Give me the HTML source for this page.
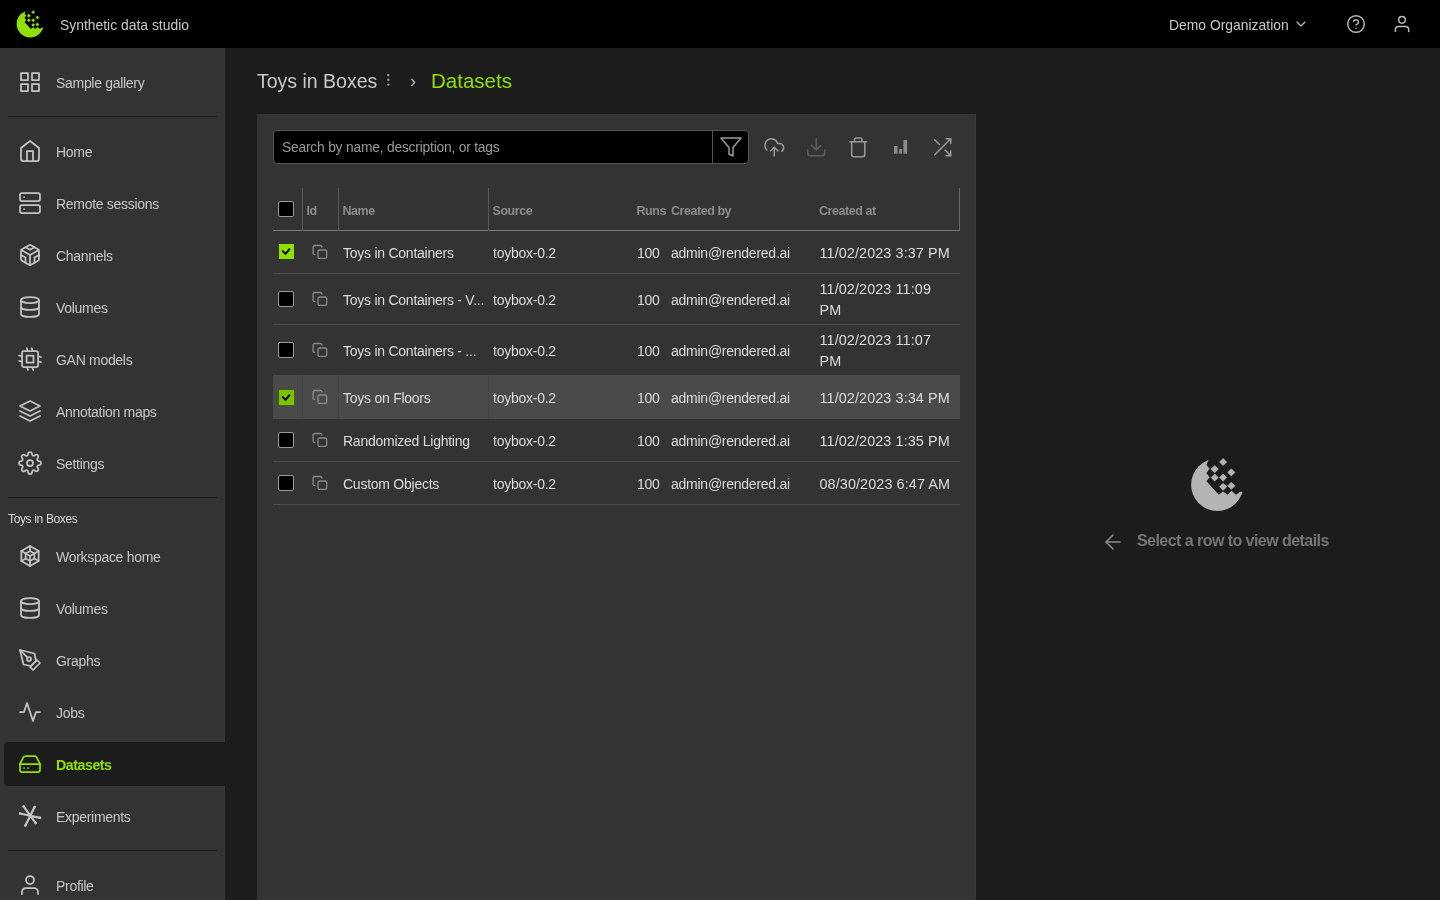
<!DOCTYPE html>
<html><head><meta charset="utf-8">
<style>
*{box-sizing:border-box;margin:0;padding:0}
html,body{width:1440px;height:900px;overflow:hidden;background:#1c1c1c;font-family:"Liberation Sans",sans-serif;position:relative}
body{will-change:transform}
.abs{position:absolute}
svg{overflow:visible}
.t{position:absolute;white-space:nowrap}
.sic{position:absolute;fill:none;stroke-width:1.75;stroke-linecap:round;stroke-linejoin:round}
.ico{position:absolute;fill:none;stroke:#999;stroke-width:1.5;stroke-linecap:round;stroke-linejoin:round}
.cbx{position:absolute;left:278px;width:16px;height:16px;background:#000;border:1px solid #9a9a9a;border-radius:2px}
.cbx.on{background:#8fe000;border:none;left:279px;width:15px;height:15px;border-radius:0}
.cbx.on.hv{background:#79c200;box-shadow:0 0 0 0.6px #3f6a00}
.cbx.on svg{position:absolute;left:0;top:0}
.cpy{position:absolute;left:312px;fill:none;stroke:#8a8a8a;stroke-width:1.3;stroke-linecap:round;stroke-linejoin:round}
.td{font-size:14px;letter-spacing:-0.25px;color:#dcdcdc;line-height:20px}
.dt{font-size:14.4px;letter-spacing:0.1px}
.th{font-size:12.5px;font-weight:bold;color:#8c8c8c;line-height:18px;letter-spacing:-0.45px}
</style></head><body>
<div class="abs" style="left:0;top:0;width:1440px;height:48px;background:#000"></div>
<svg class="abs" style="left:13.2px;top:7.2px" width="33" height="33" viewBox="0 0 64 64"><defs><mask id="m1"><rect x="-10" y="-10" width="90" height="90" fill="#fff"/><polygon points="24.9,7.1 22.4,12.8 25.6,16.7 22.4,21 25.6,25.2 22.4,29.2 34.8,42.7 39.1,39.5 43.4,42.7 47.6,38.8 51.9,42.7 56.2,39.8 70,40 70,-5 24.9,-5" fill="#000"/></mask></defs><circle cx="33.3" cy="32.8" r="26.2" fill="#8fe000" mask="url(#m1)"/><g fill="#8fe000" stroke="#8fe000" stroke-width="0.6" stroke-linejoin="round"><path d="M39.1 6.7 L42.4 10 L39.1 13.3 L35.800000000000004 10 Z"/><path d="M30.7 13.8 L34.0 17.1 L30.7 20.400000000000002 L27.4 17.1 Z"/><path d="M47.3 17.099999999999998 L50.599999999999994 20.4 L47.3 23.7 L44.0 20.4 Z"/><path d="M30.7 22.3 L34.0 25.6 L30.7 28.900000000000002 L27.4 25.6 Z"/><path d="M39.1 22.3 L42.4 25.6 L39.1 28.900000000000002 L35.800000000000004 25.6 Z"/><path d="M39.1 31.499999999999996 L42.4 34.8 L39.1 38.099999999999994 L35.800000000000004 34.8 Z"/><path d="M47.3 30.499999999999996 L50.599999999999994 33.8 L47.3 37.099999999999994 L44.0 33.8 Z"/></g></svg>
<div class="t" style="left:60px;top:13px;line-height:24px;font-size:13.9px;color:#c8c8c8">Synthetic data studio</div>
<div class="t" style="left:1169px;top:13px;line-height:24px;font-size:13.9px;color:#c8c8c8">Demo Organization</div>
<svg class="ico" style="left:1293.2px;top:15.8px;stroke:#bbb;stroke-width:1.75" width="16" height="16" viewBox="0 0 24 24"><path d="M6 9l6 6 6-6"/></svg>
<svg class="ico" style="left:1346px;top:14px;stroke:#bbb;stroke-width:1.75" width="20" height="20" viewBox="0 0 24 24"><circle cx="12" cy="12" r="10"/><path d="M9.09 9a3 3 0 0 1 5.83 1c0 2-3 3-3 3"/><circle cx="12" cy="17.2" r="0.9" fill="#bbb" stroke="none"/></svg>
<svg class="ico" style="left:1392px;top:14px;stroke:#bbb;stroke-width:1.75" width="20" height="20" viewBox="0 0 24 24"><path d="M20 21v-2a4 4 0 0 0-4-4H8a4 4 0 0 0-4 4v2"/><circle cx="12" cy="7" r="4"/></svg>

<div class="abs" style="left:0;top:48px;width:225px;height:852px;background:#333;border-right:1px solid #383838"></div>
<svg class="sic" style="left:18px;top:70px;stroke:#c4c4c4" width="24" height="24" viewBox="0 0 24 24"><rect x="3" y="3" width="7" height="7"/><rect x="14" y="3" width="7" height="7"/><rect x="14" y="14" width="7" height="7"/><rect x="3" y="14" width="7" height="7"/></svg>
<div class="t" style="left:56px;top:70.5px;line-height:24px;font-size:14px;letter-spacing:-0.3px;color:#c8c8c8;">Sample gallery</div>
<svg class="sic" style="left:18px;top:139px;stroke:#c4c4c4" width="24" height="24" viewBox="0 0 24 24"><path d="M3 9l9-7 9 7v11a2 2 0 0 1-2 2H5a2 2 0 0 1-2-2z"/><path d="M9 22V12h6v10"/></svg>
<div class="t" style="left:56px;top:139.5px;line-height:24px;font-size:14px;letter-spacing:-0.3px;color:#c8c8c8;">Home</div>
<svg class="sic" style="left:18px;top:191px;stroke:#c4c4c4" width="24" height="24" viewBox="0 0 24 24"><rect x="2" y="2" width="20" height="8" rx="2"/><rect x="2" y="14" width="20" height="8" rx="2"/><path d="M6 6h.01M6 18h.01"/></svg>
<div class="t" style="left:56px;top:191.5px;line-height:24px;font-size:14px;letter-spacing:-0.3px;color:#c8c8c8;">Remote sessions</div>
<svg class="sic" style="left:18px;top:243px;stroke:#c4c4c4" width="24" height="24" viewBox="0 0 24 24"><path d="M21 16V8a2 2 0 0 0-1-1.73l-7-4a2 2 0 0 0-2 0l-7 4A2 2 0 0 0 3 8v8a2 2 0 0 0 1 1.73l7 4a2 2 0 0 0 2 0l7-4A2 2 0 0 0 21 16z"/><path d="M7.5 4.21l4.5 2.6 4.5-2.6"/><path d="M7.5 19.79V14.6L3 12"/><path d="M21 12l-4.5 2.6v5.19"/><path d="M3.27 6.96L12 12.01l8.73-5.05"/><path d="M12 22.08V12"/></svg>
<div class="t" style="left:56px;top:243.5px;line-height:24px;font-size:14px;letter-spacing:-0.3px;color:#c8c8c8;">Channels</div>
<svg class="sic" style="left:18px;top:295px;stroke:#c4c4c4" width="24" height="24" viewBox="0 0 24 24"><ellipse cx="12" cy="5" rx="9" ry="3"/><path d="M3 5v14a9 3 0 0 0 18 0V5"/><path d="M3 12a9 3 0 0 0 18 0"/></svg>
<div class="t" style="left:56px;top:295.5px;line-height:24px;font-size:14px;letter-spacing:-0.3px;color:#c8c8c8;">Volumes</div>
<svg class="sic" style="left:18px;top:347px;stroke:#c4c4c4" width="24" height="24" viewBox="0 0 24 24"><rect x="4.1" y="4.1" width="16" height="16" rx="1.6"/><rect x="8.6" y="8.6" width="6.9" height="6.9"/><path d="M8.8 1.2L9.6 3.6M13.6 1.2L14.6 3.6M9.4 20.6L10 23M14.4 20.6L15.2 23M1.2 8.7L3.6 9.2M1.2 13.9L3.6 14.5M20.6 9.3L23 10M20.6 14.5L23 15.2"/></svg>
<div class="t" style="left:56px;top:347.5px;line-height:24px;font-size:14px;letter-spacing:-0.3px;color:#c8c8c8;">GAN models</div>
<svg class="sic" style="left:18px;top:399px;stroke:#c4c4c4" width="24" height="24" viewBox="0 0 24 24"><path d="M12 2L2 7l10 5 10-5-10-5z"/><path d="M2 17l10 5 10-5"/><path d="M2 12l10 5 10-5"/></svg>
<div class="t" style="left:56px;top:399.5px;line-height:24px;font-size:14px;letter-spacing:-0.3px;color:#c8c8c8;">Annotation maps</div>
<svg class="sic" style="left:18px;top:451px;stroke:#c4c4c4" width="24" height="24" viewBox="0 0 24 24"><circle cx="12" cy="12" r="3"/><path d="M19.4 15a1.65 1.65 0 0 0 .33 1.82l.06.06a2 2 0 0 1 0 2.83 2 2 0 0 1-2.83 0l-.06-.06a1.65 1.65 0 0 0-1.820-.33 1.65 1.65 0 0 0-1 1.51V21a2 2 0 0 1-2 2 2 2 0 0 1-2-2v-.09A1.65 1.65 0 0 0 9 19.4a1.65 1.65 0 0 0-1.82.33l-.06.06a2 2 0 0 1-2.83 0 2 2 0 0 1 0-2.83l.06-.06a1.65 1.65 0 0 0 .33-1.82 1.65 1.65 0 0 0-1.51-1H3a2 2 0 0 1-2-2 2 2 0 0 1 2-2h.09A1.65 1.65 0 0 0 4.6 9a1.65 1.65 0 0 0-.33-1.82l-.06-.06a2 2 0 0 1 0-2.830 2 2 0 0 1 2.83 0l.06.06a1.65 1.65 0 0 0 1.82.33H9a1.65 1.65 0 0 0 1-1.51V3a2 2 0 0 1 2-2 2 2 0 0 1 2 2v.09a1.65 1.65 0 0 0 1 1.51 1.65 1.65 0 0 0 1.82-.33l.06-.06a2 2 0 0 1 2.83 0 2 2 0 0 1 0 2.83l-.06.06a1.65 1.65 0 0 0-.33 1.82V9a1.65 1.65 0 0 0 1.51 1H21a2 2 0 0 1 2 2 2 2 0 0 1-2 2h-.09a1.65 1.65 0 0 0-1.51 1z"/></svg>
<div class="t" style="left:56px;top:451.5px;line-height:24px;font-size:14px;letter-spacing:-0.3px;color:#c8c8c8;">Settings</div>
<svg class="sic" style="left:18px;top:544px;stroke:#c4c4c4" width="24" height="24" viewBox="0 0 24 24"><path d="M12 2L20.66 7V17L12 22L3.34 17V7Z"/><path d="M12 7L16.33 9.5V14.5L12 17L7.67 14.5V9.5Z"/><path d="M12 2V7M20.66 7L16.33 9.5M20.66 17L16.33 14.5M12 22V17M3.34 17L7.67 14.5M3.34 7L7.67 9.5M7.67 9.5L12 12L16.33 9.5M12 12V17"/></svg>
<div class="t" style="left:56px;top:544.5px;line-height:24px;font-size:14px;letter-spacing:-0.3px;color:#c8c8c8;">Workspace home</div>
<svg class="sic" style="left:18px;top:596px;stroke:#c4c4c4" width="24" height="24" viewBox="0 0 24 24"><ellipse cx="12" cy="5" rx="9" ry="3"/><path d="M3 5v14a9 3 0 0 0 18 0V5"/><path d="M3 12a9 3 0 0 0 18 0"/></svg>
<div class="t" style="left:56px;top:596.5px;line-height:24px;font-size:14px;letter-spacing:-0.3px;color:#c8c8c8;">Volumes</div>
<svg class="sic" style="left:18px;top:648px;stroke:#c4c4c4" width="24" height="24" viewBox="0 0 24 24"><path d="M12 19l7-7 3 3-7 7-3-3z"/><path d="M18 13l-1.5-7.5L2 2l3.5 14.5L13 18l5-5z"/><path d="M2 2l7.586 7.586"/><circle cx="11" cy="11" r="2"/></svg>
<div class="t" style="left:56px;top:648.5px;line-height:24px;font-size:14px;letter-spacing:-0.3px;color:#c8c8c8;">Graphs</div>
<svg class="sic" style="left:18px;top:700px;stroke:#c4c4c4" width="24" height="24" viewBox="0 0 24 24"><path d="M22 12h-4l-3 9L9 3l-3 9H2"/></svg>
<div class="t" style="left:56px;top:700.5px;line-height:24px;font-size:14px;letter-spacing:-0.3px;color:#c8c8c8;">Jobs</div>
<div class="abs" style="left:4px;top:742px;width:221px;height:44px;background:#1c1c1c;border-radius:4px 0 0 4px"></div>
<svg class="sic" style="left:18px;top:752px;stroke:#8fe000" width="24" height="24" viewBox="0 0 24 24"><path d="M22 12H2"/><path d="M5.45 5.11L2 12v6a2 2 0 0 0 2 2h16a2 2 0 0 0 2-2v-6l-3.45-6.89A2 2 0 0 0 16.76 4H7.24a2 2 0 0 0-1.79 1.11z"/><path d="M6 16h.01M10 16h.01"/></svg>
<div class="t" style="left:56px;top:753.0px;line-height:24px;font-size:14.2px;letter-spacing:-0.45px;color:#8fe000;font-weight:bold;">Datasets</div>
<svg class="sic" style="left:18px;top:804px;stroke:#c4c4c4" width="24" height="24" viewBox="0 0 24 24"><path stroke-width="2.2" d="M5.6 2.4L17.7 19.1M16.6 3.1L7.4 21.6M2 9.5L22 13.8"/><circle cx="5.6" cy="2.4" r="1.25" fill="#c4c4c4" stroke="none"/><circle cx="17.7" cy="19.1" r="1.25" fill="#c4c4c4" stroke="none"/><circle cx="16.6" cy="3.1" r="1.25" fill="#c4c4c4" stroke="none"/><circle cx="7.4" cy="21.6" r="1.25" fill="#c4c4c4" stroke="none"/><circle cx="2" cy="9.5" r="1.25" fill="#c4c4c4" stroke="none"/><circle cx="22" cy="13.8" r="1.25" fill="#c4c4c4" stroke="none"/></svg>
<div class="t" style="left:56px;top:804.5px;line-height:24px;font-size:14px;letter-spacing:-0.3px;color:#c8c8c8;">Experiments</div>
<svg class="sic" style="left:18px;top:873px;stroke:#c4c4c4" width="24" height="24" viewBox="0 0 24 24"><path d="M20 21v-2a4 4 0 0 0-4-4H8a4 4 0 0 0-4 4v2"/><circle cx="12" cy="7" r="4"/></svg>
<div class="t" style="left:56px;top:873.5px;line-height:24px;font-size:14px;letter-spacing:-0.3px;color:#c8c8c8;">Profile</div>
<div class="abs" style="left:8px;top:116px;width:209px;height:1px;background:#1c1c1c"></div>
<div class="abs" style="left:8px;top:497px;width:209px;height:1px;background:#1c1c1c"></div>
<div class="abs" style="left:8px;top:850px;width:209px;height:1px;background:#1c1c1c"></div>
<div class="t" style="left:8px;top:511px;line-height:16px;font-size:12px;letter-spacing:-0.35px;color:#d8d8d8">Toys in Boxes</div>

<div class="t" style="left:257px;top:67px;font-size:19.5px;line-height:28px;color:#c8c8c8">Toys in Boxes</div>
<svg class="abs" style="left:386px;top:73px" width="4" height="14" viewBox="0 0 4 14"><g fill="#9a9a9a"><circle cx="2.3" cy="2" r="1.2"/><circle cx="2.3" cy="6.8" r="1.2"/><circle cx="2.3" cy="11.6" r="1.2"/></g></svg>
<div class="t" style="left:410px;top:67px;font-size:18px;line-height:28px;color:#bbb">›</div>
<div class="t" style="left:431px;top:67px;font-size:20.5px;line-height:28px;color:#8fe000">Datasets</div>

<div class="abs" style="left:257px;top:114px;width:719px;height:786px;background:#333;border-right:1px solid #383838"></div>
<div class="abs" style="left:273px;top:130px;width:476px;height:34px;background:#000;border:1px solid #555;border-radius:4px"></div>
<div class="abs" style="left:712px;top:131px;width:1px;height:32px;background:#555"></div>
<div class="t" style="left:282px;top:139px;line-height:18px;font-size:13.8px;letter-spacing:-0.2px;color:#999">Search by name, description, or tags</div>
<svg class="ico" style="left:718.65px;top:134.85px;stroke:#9a9a9a" width="24" height="24" viewBox="0 0 24 24"><path d="M22 3H2l8 9.46V19l4 2v-8.54L22 3z"/></svg>
<svg class="ico" style="left:762.8px;top:135.6px;stroke:#9a9a9a;stroke-width:1.6" width="22.5" height="22.5" viewBox="0 0 24 24"><path d="M4 14.899A7 7 0 1 1 15.71 8h1.79a4.5 4.5 0 0 1 2.5 8.242"/><path d="M12 12v9"/><path d="M16 16l-4-4-4 4"/></svg>
<svg class="ico" style="left:805.15px;top:135.55px;stroke:#5e5e5e;stroke-width:1.6" width="22.5" height="22.5" viewBox="0 0 24 24"><path d="M21 15v4a2 2 0 0 1-2 2H5a2 2 0 0 1-2-2v-4"/><path d="M7 10l5 5 5-5"/><path d="M12 15V3"/></svg>
<svg class="ico" style="left:847.05px;top:135.75px;stroke:#9a9a9a;stroke-width:1.6" width="22.5" height="22.5" viewBox="0 0 24 24"><path d="M3 6h18"/><path d="M19 6v14c0 1-1 2-2 2H7c-1 0-2-1-2-2V6"/><path d="M8 6V4c0-1 1-2 2-2h4c1 0 2 1 2 2v2"/></svg>
<svg class="abs" style="left:893.8px;top:140px" width="14" height="14" viewBox="0 0 14 14"><g fill="#8a8a8a"><rect x="0" y="6" width="3.6" height="7.7"/><rect x="5.2" y="9" width="2.8" height="4.7"/><rect x="9.4" y="0" width="3.7" height="13.7"/></g></svg>
<svg class="ico" style="left:931.1px;top:135.5px;stroke:#9a9a9a;stroke-width:1.6" width="22.5" height="22.5" viewBox="0 0 24 24"><path d="M16 3h5v5"/><path d="M4 20L21 3"/><path d="M21 16v5h-5"/><path d="M15 15l6 6"/><path d="M4 4l5 5"/></svg>
<div class="abs" style="left:273px;top:188px;width:687px;height:43px;border-bottom:1px solid #7a7a7a;border-right:1px solid #686868"></div>
<div class="cbx" style="left:278px;top:201px"></div>
<div class="abs" style="left:302px;top:188px;width:1px;height:43px;background:#5a5a5a"></div>
<div class="abs" style="left:338px;top:188px;width:1px;height:43px;background:#5a5a5a"></div>
<div class="abs" style="left:488px;top:188px;width:1px;height:43px;background:#5a5a5a"></div>
<div class="t th" style="left:306.5px;top:202px">Id</div>
<div class="t th" style="left:342.5px;top:202px">Name</div>
<div class="t th" style="left:492.5px;top:202px">Source</div>
<div class="t th" style="left:636.5px;top:202px">Runs</div>
<div class="t th" style="left:671px;top:202px">Created by</div>
<div class="t th" style="left:819px;top:202px">Created at</div>
<div class="abs" style="left:273px;top:273px;width:687px;height:1px;background:#4d4d4d"></div>
<div class="cbx on" style="top:244px"><svg width="15" height="15" viewBox="0 0 15 15"><path d="M3.7 7.1 L6.5 9.9 L10.5 5.2" fill="none" stroke="#000" stroke-width="1.9" stroke-linecap="round" stroke-linejoin="round"/></svg></div>
<svg class="cpy" style="top:244px" width="16" height="16" viewBox="0 0 16 16"><path d="M2.7 10.5 A1.6 1.6 0 0 1 1.1 8.9 V3.1 A1.6 1.6 0 0 1 2.7 1.5 H8.3 A1.6 1.6 0 0 1 9.9 3.1"/><rect x="6" y="6" width="8.7" height="8.4" rx="1.6"/></svg>
<div class="t td" style="left:343px;top:243px">Toys in Containers</div>
<div class="t td" style="left:493px;top:243px">toybox-0.2</div>
<div class="t td" style="left:637px;top:243px">100</div>
<div class="t td" style="left:671px;top:243px">admin@rendered.ai</div>
<div class="t td dt" style="left:819.5px;top:243px">11/02/2023 3:37 PM</div>
<div class="abs" style="left:273px;top:324px;width:687px;height:1px;background:#4d4d4d"></div>
<div class="cbx" style="left:278px;top:291px"></div>
<svg class="cpy" style="top:291px" width="16" height="16" viewBox="0 0 16 16"><path d="M2.7 10.5 A1.6 1.6 0 0 1 1.1 8.9 V3.1 A1.6 1.6 0 0 1 2.7 1.5 H8.3 A1.6 1.6 0 0 1 9.9 3.1"/><rect x="6" y="6" width="8.7" height="8.4" rx="1.6"/></svg>
<div class="t td" style="left:343px;top:290px">Toys in Containers - V...</div>
<div class="t td" style="left:493px;top:290px">toybox-0.2</div>
<div class="t td" style="left:637px;top:290px">100</div>
<div class="t td" style="left:671px;top:290px">admin@rendered.ai</div>
<div class="t td dt" style="left:819.5px;top:278.5px;line-height:21px">11/02/2023 11:09<br>PM</div>
<div class="abs" style="left:273px;top:375px;width:687px;height:1px;background:#4d4d4d"></div>
<div class="cbx" style="left:278px;top:342px"></div>
<svg class="cpy" style="top:342px" width="16" height="16" viewBox="0 0 16 16"><path d="M2.7 10.5 A1.6 1.6 0 0 1 1.1 8.9 V3.1 A1.6 1.6 0 0 1 2.7 1.5 H8.3 A1.6 1.6 0 0 1 9.9 3.1"/><rect x="6" y="6" width="8.7" height="8.4" rx="1.6"/></svg>
<div class="t td" style="left:343px;top:341px">Toys in Containers - ...</div>
<div class="t td" style="left:493px;top:341px">toybox-0.2</div>
<div class="t td" style="left:637px;top:341px">100</div>
<div class="t td" style="left:671px;top:341px">admin@rendered.ai</div>
<div class="t td dt" style="left:819.5px;top:329.5px;line-height:21px">11/02/2023 11:07<br>PM</div>
<div class="abs" style="left:273px;top:375px;width:687px;height:44px;background:#4a4a4a"></div>
<div class="abs" style="left:302px;top:375px;width:1px;height:44px;background:#444"></div>
<div class="abs" style="left:338px;top:375px;width:1px;height:44px;background:#444"></div>
<div class="abs" style="left:488px;top:375px;width:1px;height:44px;background:#444"></div>
<div class="cbx on hv" style="top:390px"><svg width="15" height="15" viewBox="0 0 15 15"><path d="M3.7 7.1 L6.5 9.9 L10.5 5.2" fill="none" stroke="#000" stroke-width="1.9" stroke-linecap="round" stroke-linejoin="round"/></svg></div>
<svg class="cpy" style="top:389px" width="16" height="16" viewBox="0 0 16 16"><path d="M2.7 10.5 A1.6 1.6 0 0 1 1.1 8.9 V3.1 A1.6 1.6 0 0 1 2.7 1.5 H8.3 A1.6 1.6 0 0 1 9.9 3.1"/><rect x="6" y="6" width="8.7" height="8.4" rx="1.6"/></svg>
<div class="t td" style="left:343px;top:388px">Toys on Floors</div>
<div class="t td" style="left:493px;top:388px">toybox-0.2</div>
<div class="t td" style="left:637px;top:388px">100</div>
<div class="t td" style="left:671px;top:388px">admin@rendered.ai</div>
<div class="t td dt" style="left:819.5px;top:388px">11/02/2023 3:34 PM</div>
<div class="abs" style="left:273px;top:461px;width:687px;height:1px;background:#4d4d4d"></div>
<div class="cbx" style="left:278px;top:432px"></div>
<svg class="cpy" style="top:432px" width="16" height="16" viewBox="0 0 16 16"><path d="M2.7 10.5 A1.6 1.6 0 0 1 1.1 8.9 V3.1 A1.6 1.6 0 0 1 2.7 1.5 H8.3 A1.6 1.6 0 0 1 9.9 3.1"/><rect x="6" y="6" width="8.7" height="8.4" rx="1.6"/></svg>
<div class="t td" style="left:343px;top:431px">Randomized Lighting</div>
<div class="t td" style="left:493px;top:431px">toybox-0.2</div>
<div class="t td" style="left:637px;top:431px">100</div>
<div class="t td" style="left:671px;top:431px">admin@rendered.ai</div>
<div class="t td dt" style="left:819.5px;top:431px">11/02/2023 1:35 PM</div>
<div class="abs" style="left:273px;top:504px;width:687px;height:1px;background:#4d4d4d"></div>
<div class="cbx" style="left:278px;top:475px"></div>
<svg class="cpy" style="top:475px" width="16" height="16" viewBox="0 0 16 16"><path d="M2.7 10.5 A1.6 1.6 0 0 1 1.1 8.9 V3.1 A1.6 1.6 0 0 1 2.7 1.5 H8.3 A1.6 1.6 0 0 1 9.9 3.1"/><rect x="6" y="6" width="8.7" height="8.4" rx="1.6"/></svg>
<div class="t td" style="left:343px;top:474px">Custom Objects</div>
<div class="t td" style="left:493px;top:474px">toybox-0.2</div>
<div class="t td" style="left:637px;top:474px">100</div>
<div class="t td" style="left:671px;top:474px">admin@rendered.ai</div>
<div class="t td dt" style="left:819.5px;top:474px">08/30/2023 6:47 AM</div>

<svg class="abs" style="left:1184px;top:452px" width="64" height="64" viewBox="0 0 64 64"><defs><mask id="m2"><rect x="-10" y="-10" width="90" height="90" fill="#fff"/><polygon points="24.9,7.1 22.4,12.8 25.6,16.7 22.4,21 25.6,25.2 22.4,29.2 34.8,42.7 39.1,39.5 43.4,42.7 47.6,38.8 51.9,42.7 56.2,39.8 70,40 70,-5 24.9,-5" fill="#000"/></mask></defs><circle cx="33.3" cy="32.8" r="26.2" fill="#b4b4b4" mask="url(#m2)"/><g fill="#b4b4b4" stroke="#b4b4b4" stroke-width="0.6" stroke-linejoin="round"><path d="M39.1 6.4 L42.7 10 L39.1 13.6 L35.5 10 Z"/><path d="M30.7 13.500000000000002 L34.3 17.1 L30.7 20.700000000000003 L27.099999999999998 17.1 Z"/><path d="M47.3 16.799999999999997 L50.9 20.4 L47.3 24.0 L43.699999999999996 20.4 Z"/><path d="M30.7 22.0 L34.3 25.6 L30.7 29.200000000000003 L27.099999999999998 25.6 Z"/><path d="M39.1 22.0 L42.7 25.6 L39.1 29.200000000000003 L35.5 25.6 Z"/><path d="M39.1 31.199999999999996 L42.7 34.8 L39.1 38.4 L35.5 34.8 Z"/><path d="M47.3 30.199999999999996 L50.9 33.8 L47.3 37.4 L43.699999999999996 33.8 Z"/></g></svg>
<svg class="ico" style="left:1100.7px;top:530.2px;stroke:#8a8a8a;stroke-width:1.6" width="24" height="24" viewBox="0 0 24 24"><path d="M19 12H5"/><path d="M12 19l-7-7 7-7"/></svg>
<div class="t" style="left:1137px;top:530.5px;font-size:16px;letter-spacing:-0.55px;font-weight:bold;color:#757575;line-height:20px">Select a row to view details</div>
</body></html>
